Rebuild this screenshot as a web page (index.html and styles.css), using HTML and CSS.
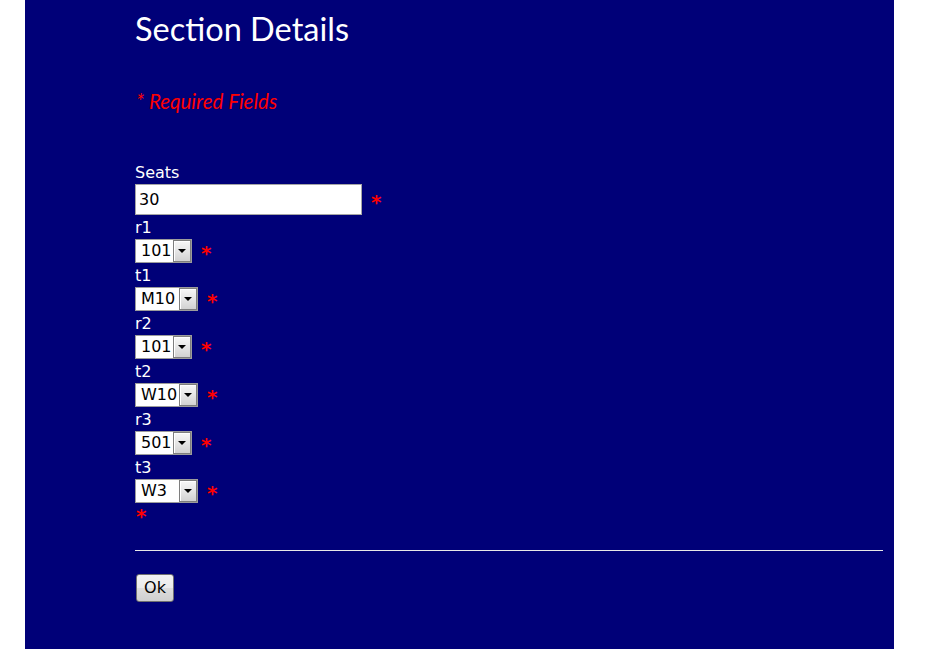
FILE: index.html
```html
<!DOCTYPE html>
<html>
<head>
<meta charset="utf-8">
<title>Section Details</title>
<link rel="stylesheet" href="styles.css">
</head>
<body>
<div class="page">
  <h1 class="title">Section Details</h1>
  <p class="required-note">* Required Fields</p>
  <form class="form">
    <div class="field">
      <label class="label" for="seats">Seats</label>
      <div class="row">
        <input class="text-input" id="seats" type="text" value="30">
        <span class="req">*</span>
      </div>
    </div>
    <div class="field">
      <label class="label" for="r1">r1</label>
      <div class="row">
        <span class="sel sel-narrow"><select id="r1"><option>101</option><option>501</option></select></span>
        <span class="req">*</span>
      </div>
    </div>
    <div class="field">
      <label class="label" for="t1">t1</label>
      <div class="row">
        <span class="sel sel-wide"><select id="t1"><option>M10</option><option>W10</option><option>W3</option></select></span>
        <span class="req">*</span>
      </div>
    </div>
    <div class="field">
      <label class="label" for="r2">r2</label>
      <div class="row">
        <span class="sel sel-narrow"><select id="r2"><option>101</option><option>501</option></select></span>
        <span class="req">*</span>
      </div>
    </div>
    <div class="field">
      <label class="label" for="t2">t2</label>
      <div class="row">
        <span class="sel sel-wide"><select id="t2"><option>W10</option><option>M10</option><option>W3</option></select></span>
        <span class="req">*</span>
      </div>
    </div>
    <div class="field">
      <label class="label" for="r3">r3</label>
      <div class="row">
        <span class="sel sel-narrow"><select id="r3"><option>501</option><option>101</option></select></span>
        <span class="req">*</span>
      </div>
    </div>
    <div class="field">
      <label class="label" for="t3">t3</label>
      <div class="row">
        <span class="sel sel-wide"><select id="t3"><option>W3</option><option>W10</option><option>M10</option></select></span>
        <span class="req">*</span>
      </div>
    </div>
    <div class="lone-req">*</div>
    <hr class="divider">
    <div class="actions">
      <button class="btn" type="button">Ok</button>
    </div>
  </form>
</div>
</body>
</html>
```

FILE: styles.css
```css
html, body {
  margin: 0;
  padding: 0;
  background: #ffffff;
}

.page {
  margin-left: 25px;
  width: 869px;
  min-height: 649px;
  box-sizing: border-box;
  padding: 0 11px 0 110px;
  background: #000078;
  color: #ffffff;
  font-family: "DejaVu Sans", Verdana, sans-serif;
  font-size: 16px;
  overflow: hidden;
}

.title {
  margin: 0;
  padding-top: 9px;
  font-family: Lato, "Open Sans", sans-serif;
  font-weight: normal;
  font-size: 32.5px;
  line-height: 40px;
  color: #ffffff;
}

.required-note {
  margin: 40px 0 0 1px;
  font-family: Lato, "Open Sans", sans-serif;
  font-style: italic;
  font-size: 20.5px;
  line-height: 24px;
  color: #ff0000;
}

.form {
  display: flex;
  flex-direction: column;
  margin-top: 50px;
}

.field {
  display: flex;
  flex-direction: column;
  margin-bottom: 3px;
}

.label {
  display: block;
  height: 20px;
  line-height: 20px;
  margin-bottom: 1px;
}

.row {
  display: flex;
  align-items: center;
}

.text-input {
  width: 227px;
  height: 31px;
  box-sizing: border-box;
  margin: 0;
  padding: 0 3px;
  border: 1px solid #a5a5a5;
  background: #ffffff;
  color: #000000;
  font-family: "DejaVu Sans", Verdana, sans-serif;
  font-size: 16px;
  outline: none;
}

.req {
  box-sizing: border-box;
  height: 20px;
  margin-left: 9px;
  padding-top: 2px;
  color: #ff0000;
  font-size: 20px;
  font-weight: bold;
  line-height: 20px;
}

.sel {
  position: relative;
  display: inline-block;
  height: 24px;
}

.sel-narrow { width: 57px; }
.sel-wide { width: 63px; }

.sel select {
  -webkit-appearance: none;
  appearance: none;
  display: block;
  width: 100%;
  height: 24px;
  box-sizing: border-box;
  margin: 0;
  padding: 0 20px 0 5px;
  border: 1px solid #9c9c9c;
  border-radius: 0;
  background: #ffffff;
  color: #000000;
  font-family: "DejaVu Sans", Verdana, sans-serif;
  font-size: 16px;
  line-height: 22px;
  outline: none;
}

.sel::after {
  content: "";
  position: absolute;
  top: 1px;
  right: 1px;
  width: 16px;
  height: 20px;
  border: 1px solid #7e7e7e;
  background:
    linear-gradient(to bottom, #f7f7f7 0%, #e6e6e6 50%, #d2d2d2 100%);
  box-shadow: inset 1px 1px 0 #ffffff;
  pointer-events: none;
}

.sel::before {
  content: "";
  position: absolute;
  top: 10px;
  right: 6px;
  width: 0;
  height: 0;
  border-left: 4px solid transparent;
  border-right: 4px solid transparent;
  border-top: 4px solid #000000;
  z-index: 1;
  pointer-events: none;
}

.lone-req {
  margin-left: 1px;
  height: 20px;
  line-height: 20px;
  font-size: 20px;
  font-weight: bold;
  color: #ff0000;
}

.divider {
  width: 100%;
  margin: 24px 0 0 0;
  border: 0;
  height: 1px;
  background: #e8e8e8;
}

.actions {
  display: flex;
  margin-top: 23px;
  padding-left: 1px;
}

.btn {
  width: 38px;
  height: 28px;
  box-sizing: border-box;
  margin: 0;
  padding: 0;
  border: 1px solid #707070;
  border-radius: 3px;
  background: linear-gradient(to bottom, #f2f2f2 0%, #ebebeb 50%, #dddddd 51%, #cfcfcf 100%);
  color: #000000;
  font-family: "DejaVu Sans", Verdana, sans-serif;
  font-size: 16px;
  line-height: 26px;
}
```
